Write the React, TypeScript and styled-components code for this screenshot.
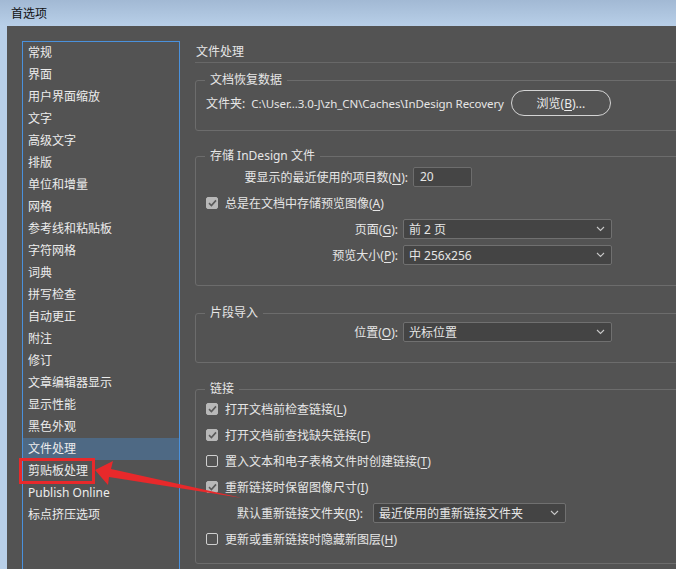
import React from "react";
import styled, { createGlobalStyle } from "styled-components";

const GlobalStyle = createGlobalStyle`
  html, body {
    margin: 0;
    padding: 0;
    background: #535353;
  }
  * { box-sizing: border-box; }
`;

const Window = styled.div`
  position: relative;
  width: 676px;
  height: 569px;
  display: flex;
  flex-direction: column;
  overflow: hidden;
  background: #535353;
  font-family: "Noto Sans", "Noto Sans CJK SC", sans-serif;
  font-size: 12px;
  color: #e6e6e6;
`;

const TitleBar = styled.div`
  flex: none;
  height: 26px;
  display: flex;
  align-items: center;
  padding-left: 11px;
  background: linear-gradient(#a2b9d4, #b8cfe8);
  color: #111;
  font-size: 12px;
`;

const Body = styled.div`
  flex: 1;
  min-height: 0;
  display: flex;
  gap: 15px;
  padding: 15px 0 0 15px;
  border-left: 7px solid #b8cfe8;
  overflow: hidden;
`;

const Sidebar = styled.ul`
  flex: none;
  width: 158px;
  height: 560px;
  margin: 0;
  padding: 0;
  list-style: none;
  border: 1px solid #4a91dc;
`;

const NavItem = styled.li<{ $active?: boolean }>`
  height: 22px;
  line-height: 22px;
  padding-left: 5px;
  color: #ececec;
  background: ${({ $active }) => ($active ? "#4e6984" : "transparent")};
`;

const Main = styled.div`
  flex: none;
  width: 520px;
  display: flex;
  flex-direction: column;
  padding-top: 1px;
`;

const Heading = styled.div`
  height: 21px;
  line-height: 20px;
  padding-left: 1px;
  border-bottom: 1px solid #686868;
`;

const Group = styled.fieldset<{ $mt: number }>`
  margin: ${({ $mt }) => $mt}px 0 0 0;
  padding: 0;
  min-width: 0;
  border: 1px solid #6c6c6c;
  border-radius: 3px;
`;

const Legend = styled.legend`
  margin-left: 9px;
  padding: 0 5px;
  line-height: 16px;
  height: 16px;
`;

const GroupBody = styled.div<{ $pt: number; $pb: number }>`
  display: flex;
  flex-direction: column;
  gap: 6px;
  padding: ${({ $pt, $pb }) => `${$pt}px 0 ${$pb}px 10px`};
`;

const FolderRow = styled.div`
  display: flex;
  align-items: center;
  height: 26px;
`;

const Path = styled.span`
  font-size: 11.5px;
  margin-left: 6px;
  white-space: nowrap;
  letter-spacing: -0.06px;
`;

const PillButton = styled.button`
  margin-left: 7px;
  width: 100px;
  height: 26px;
  border: 1px solid #d4d4d4;
  border-radius: 13px;
  background: transparent;
  color: #ececec;
  font: inherit;
  padding: 0;
`;

const FieldRow = styled.div<{ $indent?: number }>`
  display: flex;
  align-items: center;
  height: 20px;
  gap: 5px;
  padding-left: ${({ $indent = 0 }) => $indent}px;
`;

const Label = styled.span<{ $w?: number; $left?: boolean }>`
  ${({ $w }) => ($w ? `width: ${$w}px;` : "")}
  text-align: ${({ $left }) => ($left ? "left" : "right")};
  white-space: nowrap;
`;

const Key = styled.u`
  text-underline-offset: 2px;
`;

const TextInput = styled.div`
  width: 59px;
  height: 20px;
  line-height: 18px;
  padding-left: 6px;
  background: #454545;
  border: 1px solid #6d6d6d;
  border-radius: 2px;
`;

const Select = styled.div<{ $w: number }>`
  width: ${({ $w }) => $w}px;
  height: 20px;
  display: flex;
  align-items: center;
  justify-content: space-between;
  padding: 0 6px 0 5px;
  background: #444444;
  border: 1px solid #707070;
  border-radius: 2px;
  white-space: nowrap;
`;

const CheckRow = styled.div`
  display: flex;
  align-items: center;
  height: 20px;
  gap: 7px;
`;

const Box = styled.span<{ $checked?: boolean }>`
  flex: none;
  width: 12px;
  height: 12px;
  display: flex;
  align-items: center;
  justify-content: center;
  border-radius: 2px;
  border: 1px solid ${({ $checked }) => ($checked ? "#b8b8b8" : "#cfcfcf")};
  background: ${({ $checked }) => ($checked ? "#b8b8b8" : "transparent")};
`;

const Overlay = styled.svg`
  position: absolute;
  left: 0;
  top: 0;
  pointer-events: none;
`;

const Chevron = () => (
  <svg width="9" height="6" viewBox="0 0 9 6">
    <polyline points="1,1 4.5,4.5 8,1" fill="none" stroke="#c8c8c8" strokeWidth="1.1" />
  </svg>
);

const Check = ({ checked, children }: { checked?: boolean; children: React.ReactNode }) => (
  <CheckRow>
    <Box $checked={checked}>
      {checked && (
        <svg width="9" height="8" viewBox="0 0 9 8">
          <polyline points="1,4.2 3.4,6.5 8,1.4" fill="none" stroke="#5a5a5a" strokeWidth="1.6" />
        </svg>
      )}
    </Box>
    <span>{children}</span>
  </CheckRow>
);

const navItems = [
  "常规",
  "界面",
  "用户界面缩放",
  "文字",
  "高级文字",
  "排版",
  "单位和增量",
  "网格",
  "参考线和粘贴板",
  "字符网格",
  "词典",
  "拼写检查",
  "自动更正",
  "附注",
  "修订",
  "文章编辑器显示",
  "显示性能",
  "黑色外观",
  "文件处理",
  "剪贴板处理",
  "Publish Online",
  "标点挤压选项",
];

export default function App() {
  return (
    <>
      <GlobalStyle />
      <Window>
        <TitleBar>首选项</TitleBar>
        <Body>
          <Sidebar>
            {navItems.map((item) => (
              <NavItem key={item} $active={item === "文件处理"}>
                {item}
              </NavItem>
            ))}
          </Sidebar>

          <Main>
            <Heading>文件处理</Heading>

            <Group $mt={9}>
              <Legend>文档恢复数据</Legend>
              <GroupBody $pt={2} $pb={14}>
                <FolderRow>
                  <span>文件夹:</span>
                  <Path>C:\User...3.0-J\zh_CN\Caches\InDesign Recovery</Path>
                  <PillButton>
                    浏览(<Key>B</Key>)...
                  </PillButton>
                </FolderRow>
              </GroupBody>
            </Group>

            <Group $mt={17}>
              <Legend>存储 InDesign 文件</Legend>
              <GroupBody $pt={3} $pb={20}>
                <FieldRow>
                  <Label $w={202}>
                    要显示的最近使用的项目数(<Key>N</Key>):
                  </Label>
                  <TextInput>20</TextInput>
                </FieldRow>
                <Check checked>
                  总是在文档中存储预览图像(<Key>A</Key>)
                </Check>
                <FieldRow>
                  <Label $w={192}>
                    页面(<Key>G</Key>):
                  </Label>
                  <Select $w={209}>
                    前 2 页
                    <Chevron />
                  </Select>
                </FieldRow>
                <FieldRow>
                  <Label $w={192}>
                    预览大小(<Key>P</Key>):
                  </Label>
                  <Select $w={209}>
                    中 256x256
                    <Chevron />
                  </Select>
                </FieldRow>
              </GroupBody>
            </Group>

            <Group $mt={19}>
              <Legend>片段导入</Legend>
              <GroupBody $pt={1} $pb={20}>
                <FieldRow>
                  <Label $w={192}>
                    位置(<Key>O</Key>):
                  </Label>
                  <Select $w={209}>
                    光标位置
                    <Chevron />
                  </Select>
                </FieldRow>
              </GroupBody>
            </Group>

            <Group $mt={18}>
              <Legend>链接</Legend>
              <GroupBody $pt={2} $pb={14}>
                <Check checked>
                  打开文档前检查链接(<Key>L</Key>)
                </Check>
                <Check checked>
                  打开文档前查找缺失链接(<Key>F</Key>)
                </Check>
                <Check>
                  置入文本和电子表格文件时创建链接(<Key>T</Key>)
                </Check>
                <Check checked>
                  重新链接时保留图像尺寸(<Key>I</Key>)
                </Check>
                <FieldRow $indent={31}>
                  <Label $w={131} $left>
                    默认重新链接文件夹(<Key>R</Key>):
                  </Label>
                  <Select $w={193}>
                    最近使用的重新链接文件夹
                    <Chevron />
                  </Select>
                </FieldRow>
                <Check>
                  更新或重新链接时隐藏新图层(<Key>H</Key>)
                </Check>
              </GroupBody>
            </Group>
          </Main>
        </Body>

        <Overlay width="676" height="569" viewBox="0 0 676 569">
          <rect x="20.5" y="459.5" width="73" height="23" fill="none" stroke="#e8292b" strokeWidth="3" />
          <polygon
            points="95,470 113,461 111,469 242,498 109,477 108,485"
            fill="#e8292b"
          />
        </Overlay>
      </Window>
    </>
  );
}
